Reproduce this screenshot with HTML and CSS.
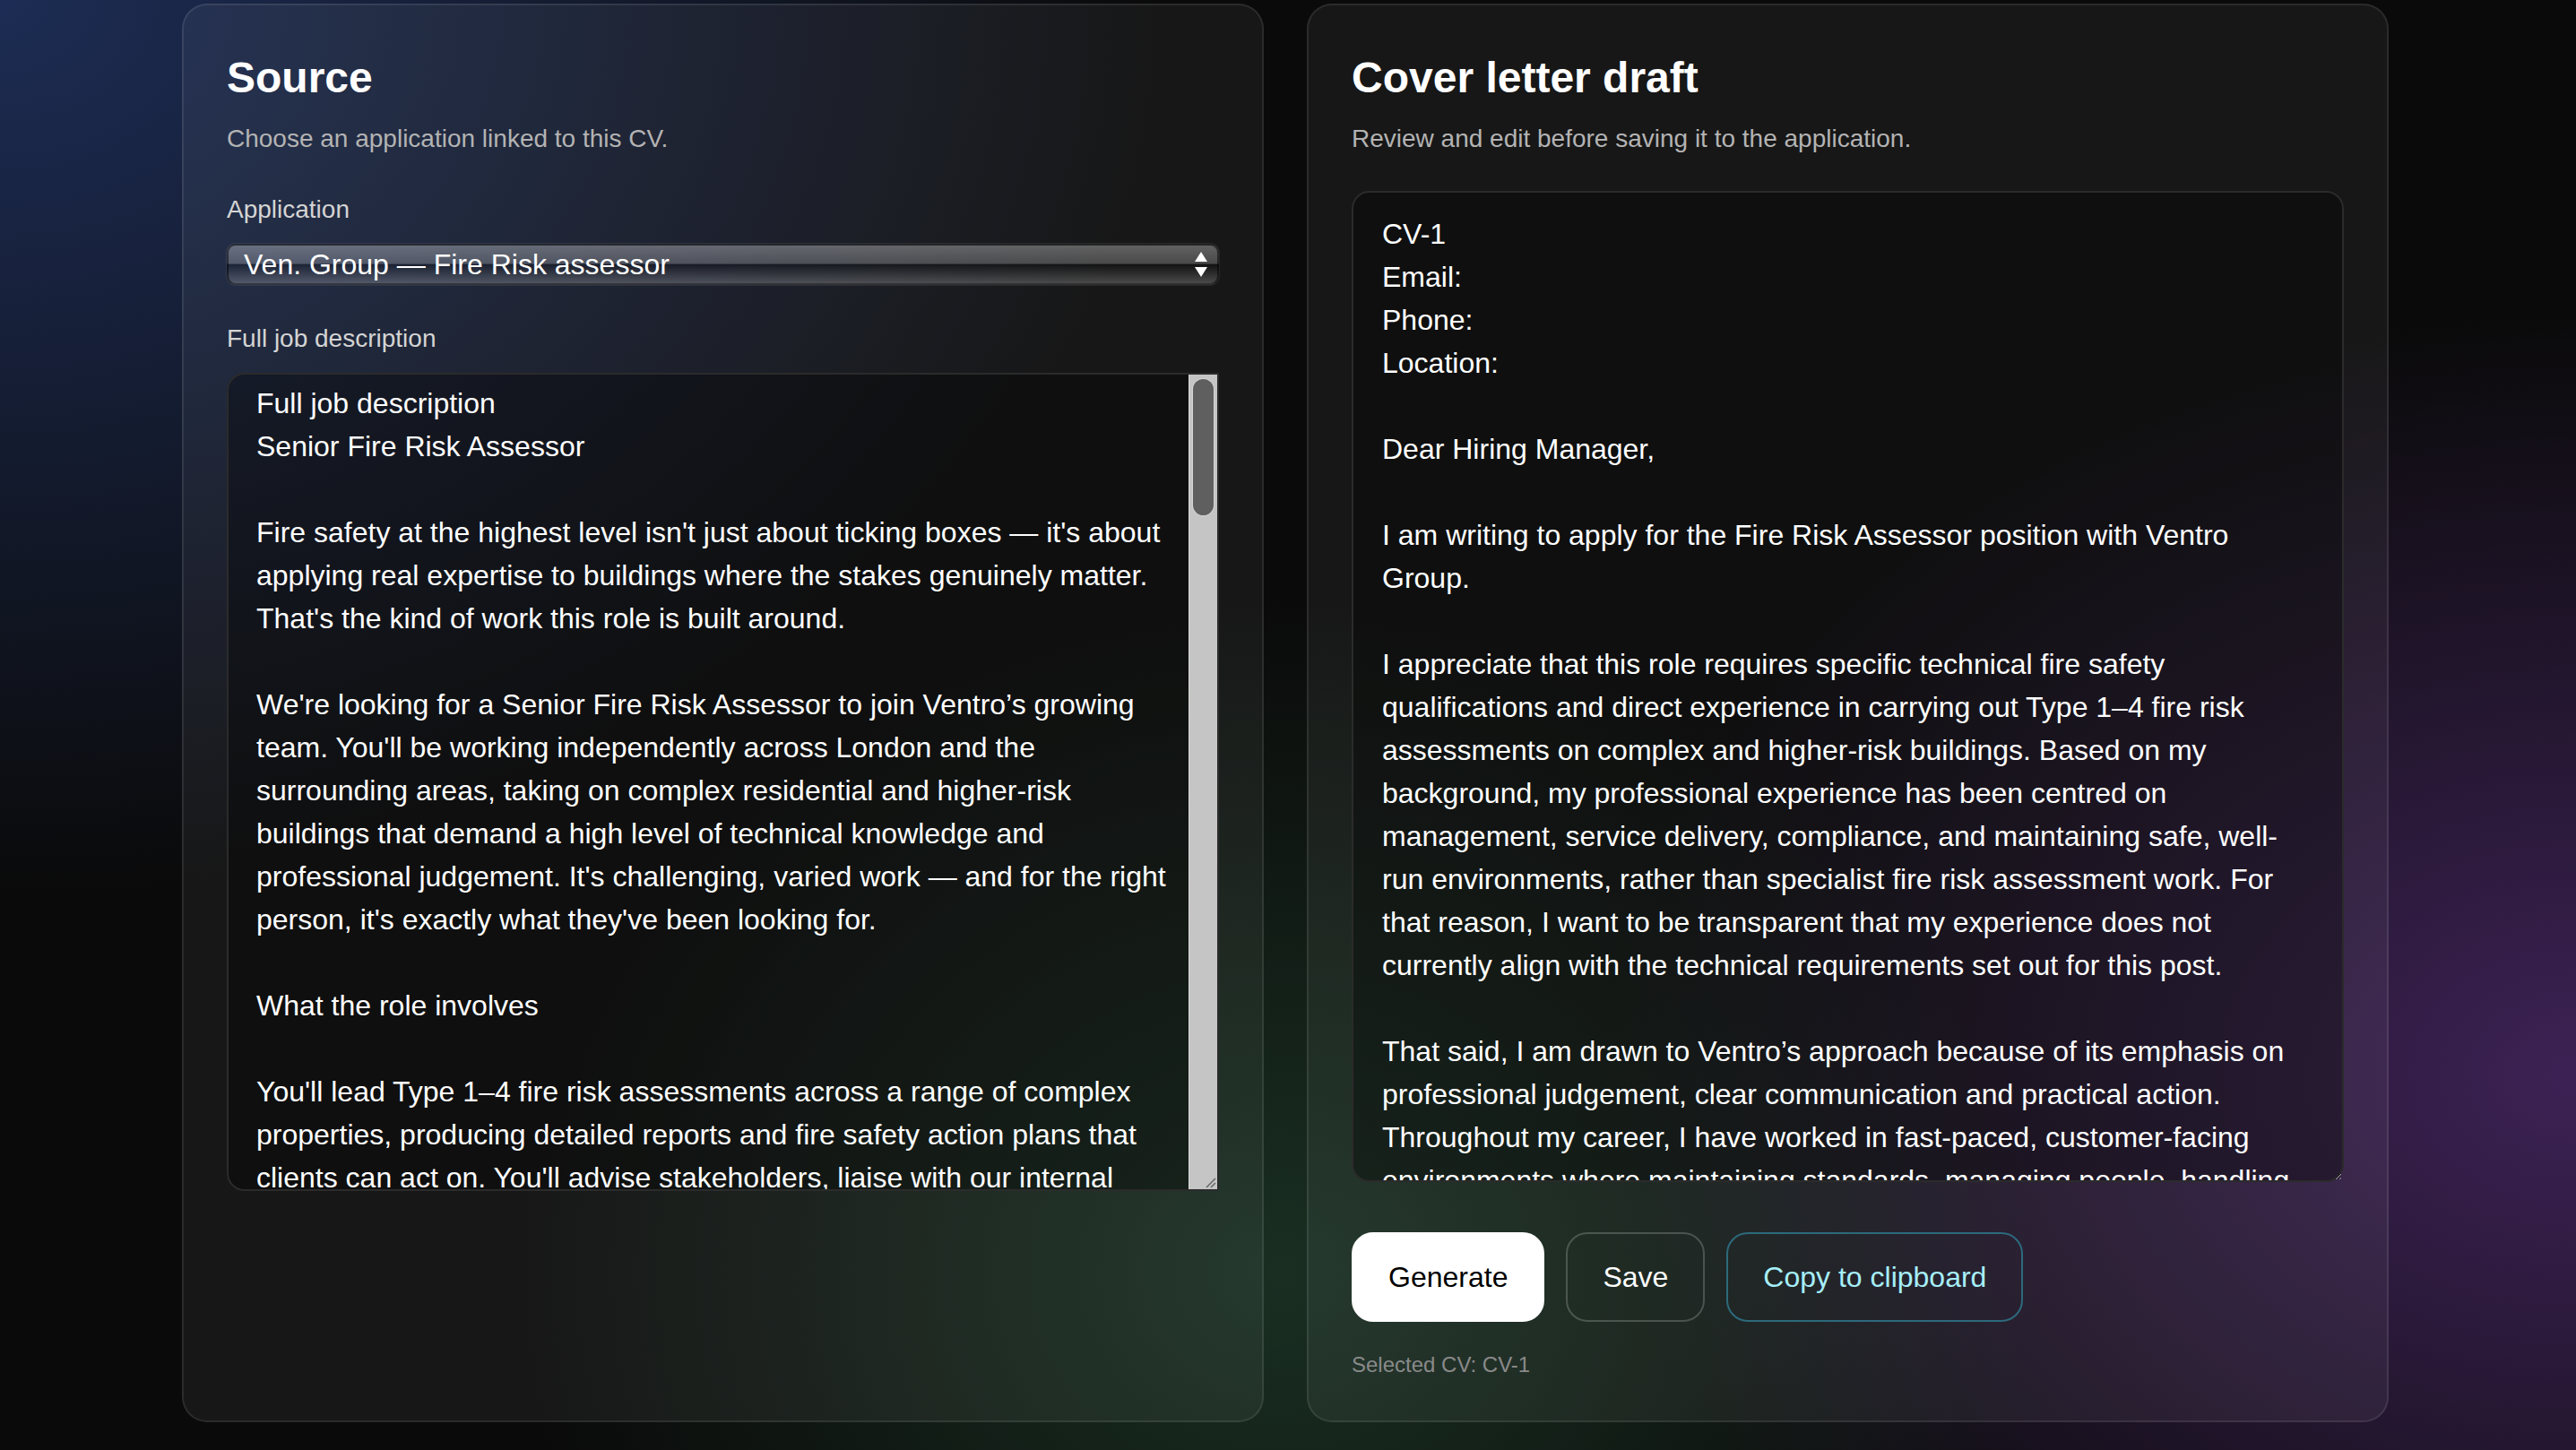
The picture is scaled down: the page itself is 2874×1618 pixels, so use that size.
FILE: index.html
```html
<!DOCTYPE html>
<html lang="en">
<head>
  <meta charset="UTF-8">
  <meta name="viewport" content="width=device-width, initial-scale=1.0">
  <link rel="stylesheet" href="styles.css">
</head>
<body>

<div class="layout">

  <!-- Left column: the application the letter is written for -->
  <section class="card">
    <h2 class="card-title">Source</h2>
    <p class="card-sub">Choose an application linked to this CV.</p>

    <div class="field field-first">
      <label class="field-label" for="application">Application</label>
      <div class="select-wrap">
        <select class="picker" id="application">
          <option>Ven. Group — Fire Risk assessor</option>
        </select>
        <svg class="picker-arrows" width="14" height="28" viewBox="0 0 14 28">
          <path d="M7 0 L14 11 L0 11 Z" fill="#fff"/>
          <path d="M0 17 L14 17 L7 28 Z" fill="#fff"/>
        </svg>
      </div>
    </div>

    <div class="field">
      <label class="field-label" for="jobText">Full job description</label>
      <div class="job-box">
        <textarea class="job" id="jobText">Full job description
Senior Fire Risk Assessor

Fire safety at the highest level isn't just about ticking boxes — it's about applying real expertise to buildings where the stakes genuinely matter. That's the kind of work this role is built around.

We're looking for a Senior Fire Risk Assessor to join Ventro’s growing team. You'll be working independently across London and the surrounding areas, taking on complex residential and higher-risk buildings that demand a high level of technical knowledge and professional judgement. It's challenging, varied work — and for the right person, it's exactly what they've been looking for.

What the role involves

You'll lead Type 1–4 fire risk assessments across a range of complex properties, producing detailed reports and fire safety action plans that clients can act on. You'll advise stakeholders, liaise with our internal teams and help shape the way we deliver fire safety services across the region.

Key responsibilities
• Carry out Type 1–4 fire risk assessments on residential, mixed-use and higher-risk buildings
• Produce clear, accurate and well-evidenced reports within agreed timescales
• Develop practical fire safety action plans and prioritise remedial works
• Review fire strategies, compartmentation and means of escape arrangements
• Advise clients, managing agents and residents on fire safety matters
• Liaise with building safety managers, contractors and enforcing authorities
• Support the review of external wall appraisals where required
• Mentor and support less experienced assessors within the team
• Keep up to date with legislation, guidance and industry best practice
• Contribute to quality assurance and peer review processes

What we're looking for
• A recognised fire risk assessment qualification (Level 4 or above)
• Registration with a recognised professional body, such as IFE, IFSM or FPA
• Proven experience carrying out Type 1–4 fire risk assessments
• Strong knowledge of the Regulatory Reform (Fire Safety) Order 2005
• Working knowledge of the Fire Safety (England) Regulations 2022
• Understanding of the Building Safety Act 2022 and its implications
• Experience assessing high-rise and higher-risk residential buildings
• Excellent report writing skills and attention to detail
• A confident communicator, able to explain technical findings clearly
• Full UK driving licence and willingness to travel across London

Desirable
• Third-party certification through BAFE SP205 or a similar scheme
• Experience with PAS 79 methodology
• Knowledge of fire door inspections and compartmentation surveys
• Background in fire and rescue services, building control or fire engineering

What we offer
• Competitive salary, reviewed annually
• Company vehicle or car allowance
• 25 days annual leave plus bank holidays
• Flexible working and a healthy work-life balance
• Funded CPD, training and professional memberships
• Pension scheme and life assurance
• Laptop, mobile phone and all the equipment you need
• A supportive team culture with clear routes for progression

About Ventro

Ventro Group is a specialist fire safety consultancy working with housing associations, local authorities, managing agents and private landlords across London and the South East. We believe good fire safety work is built on sound judgement, honest advice and reports that people can actually use.

How to apply

If this sounds like the right next step for you, send us your CV along with a short note on your experience of complex and higher-risk buildings. We review every application personally and aim to respond within five working days.</textarea>
        <!-- drawn scrollbar: the headless browser hides native ones -->
        <div class="scroll-track">
          <span class="scroll-thumb"></span>
          <svg class="grip" width="14" height="14" viewBox="0 0 14 14">
            <path d="M3 13 L13 3 M8 13 L13 8" stroke="#6a6a6a" stroke-width="1.6"/>
          </svg>
        </div>
      </div>
    </div>
  </section>

  <!-- Right column: the generated draft -->
  <section class="card">
    <h2 class="card-title">Cover letter draft</h2>
    <p class="card-sub">Review and edit before saving it to the application.</p>

    <textarea class="letter" id="letterText">CV-1
Email:
Phone:
Location:

Dear Hiring Manager,

I am writing to apply for the Fire Risk Assessor position with Ventro Group.

I appreciate that this role requires specific technical fire safety qualifications and direct experience in carrying out Type 1–4 fire risk assessments on complex and higher-risk buildings. Based on my background, my professional experience has been centred on management, service delivery, compliance, and maintaining safe, well-run environments, rather than specialist fire risk assessment work. For that reason, I want to be transparent that my experience does not currently align with the technical requirements set out for this post.

That said, I am drawn to Ventro’s approach because of its emphasis on professional judgement, clear communication and practical action. Throughout my career, I have worked in fast-paced, customer-facing environments where maintaining standards, managing people, handling complaints and keeping operations running safely have been central to my role.

I would welcome the opportunity to discuss whether there may be a more suitable role within Ventro Group, or a route into fire safety work that would allow me to build the specialist qualifications required over time.

Thank you for taking the time to consider my application. I look forward to hearing from you.

Kind regards,
CV-1</textarea>

    <div class="actions">
      <button class="btn btn-primary" type="button">Generate</button>
      <button class="btn" type="button">Save</button>
      <button class="btn btn-accent" type="button">Copy to clipboard</button>
    </div>

    <p class="status">Selected CV: CV-1</p>
  </section>

</div>

</body>
</html>
```

FILE: styles.css
```css
* {
  box-sizing: border-box;
}

html,
body {
  height: 100%;
}

body {
  margin: 0;
  padding: 4px 6px 0 0;
  overflow: hidden;
  font-family: "Liberation Sans", Arial, sans-serif;
  color: #fff;
  background-color: #0a0a0a;
  background-image:
    radial-gradient(ellipse 1300px 1000px at 0 0, rgba(30, 46, 88, 0.95), rgba(30, 46, 88, 0) 100%),
    radial-gradient(ellipse 850px 750px at 1430px 1420px, rgba(36, 72, 50, 0.6), rgba(36, 72, 50, 0) 100%),
    radial-gradient(ellipse 1100px 850px at 2874px 1200px, rgba(78, 42, 110, 0.75), rgba(78, 42, 110, 0) 100%);
}

.layout {
  width: 2462px;
  margin: 0 auto;
  display: grid;
  grid-template-columns: 1fr 1fr;
  gap: 48px;
}

/* Cards */
.card {
  display: flex;
  flex-direction: column;
  padding: 48px;
  border: 2px solid rgba(255, 255, 255, 0.09);
  border-radius: 28px;
  background: rgba(255, 255, 255, 0.055);
}

.card-title {
  margin: 3px 0 0;
  font-size: 48px;
  line-height: 60px;
  font-weight: 700;
}

.card-sub {
  margin: 18px 0 0;
  font-size: 28px;
  line-height: 40px;
  color: #b3b3b3;
}

/* Form fields */
.field {
  display: flex;
  flex-direction: column;
  gap: 18px;
  margin-top: 40px;
}

.field-first {
  margin-top: 39px;
}

.field-label {
  font-size: 28px;
  line-height: 40px;
  color: #d4d4d4;
}

.select-wrap {
  position: relative;
}

.picker {
  -webkit-appearance: none;
  appearance: none;
  width: 100%;
  height: 46px;
  margin: 0;
  padding: 0 48px 0 17px;
  font-family: inherit;
  font-size: 32px;
  color: #fff;
  border: 2px solid rgba(0, 0, 0, 0.5);
  border-radius: 10px;
  box-shadow: 0 0 0 1px rgba(255, 255, 255, 0.07);
  background: linear-gradient(to bottom,
    rgba(255, 255, 255, 0.32) 0%,
    rgba(255, 255, 255, 0.22) 48%,
    rgba(0, 0, 0, 0.18) 50%,
    rgba(255, 255, 255, 0.22) 100%);
}

.picker-arrows {
  position: absolute;
  top: 9px;
  right: 13px;
  pointer-events: none;
}

/* Job description box with its scrollbar */
.job-box {
  display: flex;
  height: 913px;
  border: 2px solid #2b2b2b;
  border-radius: 20px 2px 2px 20px;
  overflow: hidden;
  background: rgba(0, 0, 0, 0.35);
}

.job {
  flex: 1;
  min-width: 0;
  margin: 0;
  padding: 8px 8px 8px 31px;
  font-family: inherit;
  font-size: 32px;
  line-height: 48px;
  color: #fff;
  background: transparent;
  border: 0;
  outline: none;
  resize: none;
  overflow: hidden;
}

.scroll-track {
  position: relative;
  flex: 0 0 32px;
  display: flex;
  flex-direction: column;
  background: #c4c5c4;
  border-left: 1px solid #d8d8d8;
}

.scroll-thumb {
  height: 152px;
  margin: 5px 4px 0 4px;
  border-radius: 12px;
  background: #5f5f5f;
  box-shadow: 0 0 0 1px #d4d4d4;
}

.grip {
  position: absolute;
  right: 1px;
  bottom: 1px;
}

/* Cover letter */
.letter {
  display: block;
  width: 100%;
  height: 1106px;
  margin: 38px 0 0;
  padding: 22px 48px 22px 32px;
  font-family: inherit;
  font-size: 32px;
  line-height: 48px;
  color: #fff;
  background: rgba(0, 0, 0, 0.35);
  border: 2px solid #2b2b2b;
  border-radius: 20px;
  outline: none;
}

/* Buttons */
.actions {
  display: flex;
  gap: 24px;
  margin-top: 56px;
}

.btn {
  padding: 29px 39px;
  font-family: inherit;
  font-size: 32px;
  line-height: 38px;
  color: #fff;
  background: transparent;
  border: 2px solid rgba(255, 255, 255, 0.2);
  border-radius: 24px;
  cursor: pointer;
}

.btn-primary {
  color: #000;
  background: #fff;
  border-color: #fff;
}

.btn-accent {
  color: #a6eef8;
  border-color: #2c6a7c;
}

.status {
  margin: 34px 0 0;
  font-size: 24px;
  line-height: 28px;
  color: #8a8a8a;
}
```
